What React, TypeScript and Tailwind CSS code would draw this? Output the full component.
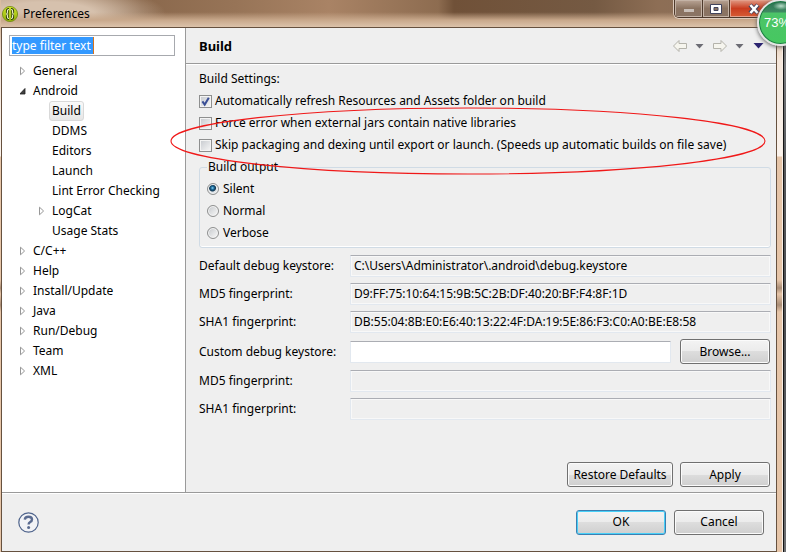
import { useState } from "react";

type Node = { label: string; level: 0 | 1; state: "closed" | "open" | "leaf" };

const tree: Node[] = [
  { label: "General", level: 0, state: "closed" },
  { label: "Android", level: 0, state: "open" },
  { label: "Build", level: 1, state: "leaf" },
  { label: "DDMS", level: 1, state: "leaf" },
  { label: "Editors", level: 1, state: "leaf" },
  { label: "Launch", level: 1, state: "leaf" },
  { label: "Lint Error Checking", level: 1, state: "leaf" },
  { label: "LogCat", level: 1, state: "closed" },
  { label: "Usage Stats", level: 1, state: "leaf" },
  { label: "C/C++", level: 0, state: "closed" },
  { label: "Help", level: 0, state: "closed" },
  { label: "Install/Update", level: 0, state: "closed" },
  { label: "Java", level: 0, state: "closed" },
  { label: "Run/Debug", level: 0, state: "closed" },
  { label: "Team", level: 0, state: "closed" },
  { label: "XML", level: 0, state: "closed" },
];

function AppIcon() {
  return (
    <svg width="16" height="16" viewBox="0 0 16 16" aria-hidden="true">
      <defs>
        <linearGradient id="lime" x1="0" y1="0" x2="0" y2="1">
          <stop offset="0" stopColor="#cfe32c" />
          <stop offset="1" stopColor="#8fb008" />
        </linearGradient>
      </defs>
      <circle cx="8" cy="8" r="7.6" fill="url(#lime)" stroke="#6e8a10" strokeWidth="0.8" />
      <path d="M7 3.5Q5.4 3.5 5.4 5V6.6Q5.4 8 4.2 8Q5.4 8 5.4 9.4V11Q5.4 12.5 7 12.5M9 3.5Q10.6 3.5 10.6 5V6.6Q10.6 8 11.8 8Q10.6 8 10.6 9.4V11Q10.6 12.5 9 12.5" fill="none" stroke="#2c3a08" strokeWidth="3" />
      <path d="M8 3.6V12.4" stroke="#b6cf22" strokeWidth="2.4" />
      <path d="M7 3.5Q5.4 3.5 5.4 5V6.6Q5.4 8 4.2 8Q5.4 8 5.4 9.4V11Q5.4 12.5 7 12.5M9 3.5Q10.6 3.5 10.6 5V6.6Q10.6 8 11.8 8Q10.6 8 10.6 9.4V11Q10.6 12.5 9 12.5" fill="none" stroke="#f3f7cf" strokeWidth="1.1" />
    </svg>
  );
}

function Twisty({ state }: { state: Node["state"] }) {
  return (
    <svg width="8" height="10" viewBox="0 0 8 10" aria-hidden="true" className="shrink-0">
      {state === "closed" && <path d="M0.5 1.2V8.8L4.6 5Z" fill="#fff" stroke="#979797" />}
      {state === "open" && <path d="M5 2.5V8H-0.2Z" fill="#404040" stroke="#202020" strokeWidth="0.8" />}
    </svg>
  );
}

function Check({ label, initial = false }: { label: string; initial?: boolean }) {
  const [on, setOn] = useState(initial);
  return (
    <label className="flex h-[22px] items-center gap-[3px]">
      <span className="grid">
        <input
          type="checkbox"
          checked={on}
          onChange={() => setOn(!on)}
          className="col-start-1 row-start-1 size-[13px] appearance-none border border-[#8e8f8f] bg-linear-to-br from-[#c6c9ce] to-[#f8f8f8] shadow-[inset_0_0_0_1px_#f4f4f4]"
        />
        {on && (
          <svg width="13" height="13" viewBox="0 0 13 13" aria-hidden="true" className="pointer-events-none col-start-1 row-start-1">
            <path d="M3.4 6.4L5.7 9.6L9.8 2.8" fill="none" stroke="#3a4f96" strokeWidth="2" />
          </svg>
        )}
      </span>
      {label}
    </label>
  );
}

function Radio({ label, initial = false }: { label: string; initial?: boolean }) {
  return (
    <label className="flex h-[22px] items-center gap-1">
      <input
        type="radio"
        name="build-output"
        defaultChecked={initial}
        className="size-3 appearance-none rounded-full border border-[#8e8f8f] bg-[linear-gradient(135deg,#c4c7cb,#fafafa)] shadow-[inset_0_0_0_1px_#f4f4f4] checked:bg-[radial-gradient(circle_at_45%_40%,#8fd8f6_0,#1c6ea0_1.5px,#12354f_3px,#dfe4e8_4px)]"
      />
      {label}
    </label>
  );
}

function Field({ id, label, value = "", editable = false, short = false }: { id: string; label: string; value?: string; editable?: boolean; short?: boolean }) {
  return (
    <div className={short ? "flex h-7 items-center" : "flex h-[25px] items-center"}>
      <label htmlFor={id} className="w-[151px] shrink-0">{label}</label>
      <input
        id={id}
        defaultValue={value}
        readOnly={!editable}
        className={
          "h-[22px] min-w-0 flex-1 rounded-[1px] border border-[#e2e8ef] border-t-[#abadb3] px-[3px] pb-0.5 outline-none " +
          (editable ? "bg-white" : "bg-[#efefef] shadow-[inset_0_0_0_1px_#f8f8f8]")
        }
      />
      {editable && <Button className="ml-[9px] mr-px w-[90px]">Browse...</Button>}
    </div>
  );
}

function Button({ children, className, primary = false }: { children: string; className: string; primary?: boolean }) {
  return (
    <button
      type="button"
      className={
        "h-[25px] shrink-0 rounded-[3px] border bg-[linear-gradient(#f3f3f3,#ebebeb_50%,#dddddd_50%,#cfcfcf)] text-center " +
        (primary ? "border-[#3c7fb1] shadow-[inset_0_0_0_1px_#48d0f8] " : "border-[#707070] shadow-[inset_0_0_0_1px_#fbfbfb] ") +
        className
      }
    >
      {children}
    </button>
  );
}

function NavArrow({ flip = false }: { flip?: boolean }) {
  return (
    <svg width="16" height="14" viewBox="0 0 16 14" aria-hidden="true" className={flip ? "-scale-x-100" : ""}>
      <path d="M1.5 7L7 1.5V4.5H14.5V9.5H7V12.5Z" fill="#f6f5ee" stroke="#b4b3ab" strokeLinejoin="round" />
    </svg>
  );
}

function Caret({ color }: { color: "gray" | "navy" }) {
  if (color === "navy") {
    return (
      <svg width="11" height="6" viewBox="0 0 11 6" aria-hidden="true">
        <path d="M0.5 0H10.5L5.5 5.5Z" fill="#2c2470" />
      </svg>
    );
  }
  return (
    <svg width="9" height="5" viewBox="0 0 9 5" aria-hidden="true">
      <path d="M0.5 0H8.5L4.5 4.6Z" fill="#6c6c74" />
    </svg>
  );
}

function TitleBar() {
  return (
    <header className="flex h-[27px] items-center gap-[5px] bg-[linear-gradient(to_bottom,transparent_45%,#c9a98c_75%,#dcc3ab),radial-gradient(ellipse_120px_30px_at_45px_14px,#d6c1ad_40%,transparent),linear-gradient(to_right,#b0937a,#8a684c_18%,#977457_30%,#a98365_42%,#8d6c50_56%,#705138_58%,#755a43_76%,#8d6e55_84%,#8b705e)] pl-px">
      <AppIcon />
      <h1>Preferences</h1>
      <div className="ml-auto mr-2 flex h-[18px] self-start overflow-hidden rounded-b-[5px] border border-t-0 border-[#4e3a2c] shadow-[0_0_0_1px_#dccabc]">
        <button type="button" aria-label="Minimize" className="grid w-7 place-items-center border-r border-[#4e3a2c] bg-[linear-gradient(#b9a495,#8b7361_50%,#8a7464)] shadow-[inset_0_0_0_1px_#c4b3a6]">
          <span className="mt-1 h-[3px] w-2.5 bg-[#c9bfb8]" />
        </button>
        <button type="button" aria-label="Maximize" className="grid w-[27px] place-items-center border-r border-[#4e3a2c] bg-[linear-gradient(#b9a495,#8b7361_50%,#8a7464)] shadow-[inset_0_0_0_1px_#c4b3a6]">
          <svg width="12" height="10" viewBox="0 0 12 10" aria-hidden="true">
            <path d="M0.5 0.5H11.5V9.5H0.5ZM4 3.5V6.5H8V3.5Z" fill="#fff" fillRule="evenodd" stroke="#41435c" />
          </svg>
        </button>
        <button type="button" aria-label="Close" className="grid w-[43px] place-items-center bg-[linear-gradient(#e09a84,#c93c1f_50%,#d65c35)] pl-1 shadow-[inset_0_0_0_1px_#e3a08c]">
          <svg width="12" height="12" viewBox="0 0 12 12" aria-hidden="true">
            <path d="M2 2L10 10M10 2L2 10" stroke="#41435c" strokeWidth="4.4" />
            <path d="M2.4 2L9.6 10M9.6 2L2.4 10" stroke="#fff" strokeWidth="2.6" />
          </svg>
        </button>
      </div>
    </header>
  );
}

export default function App() {
  const [selected, setSelected] = useState("Build");
  return (
    <div className="relative flex min-h-screen overflow-hidden bg-[linear-gradient(#3a3a3a,#77797c_12%,#55575a_30%,#4c4e52_60%,#6c6e71)] font-['Noto_Sans','Open_Sans',sans-serif] text-[12px] leading-4 text-black">
      <div className="mr-[3px] flex min-w-0 flex-1 flex-col border-r border-[#f8eee6] bg-[linear-gradient(#d9bda2_28px,#f4e6da_60px,#fbf3ec_156px,#e6c5a8_157px,#e6c5a8_280px,#a98d76_288px,#e6c5a8_294px,#a98d76_305px,#e6c5a8_312px)] pl-px">
        <TitleBar />
        <div className="mr-[5px] flex flex-1 flex-col border border-[#66513f] bg-[#efefef]">
          <div className="flex flex-1 border-b border-[#9a9a9a]">
            <aside className="w-[184px] shrink-0 border-r border-[#9a9a9a] bg-white pt-[7px]">
              <div className="ml-[7px] mr-[10px] flex h-[21px] items-center border border-[#a7a9ae] px-0.5">
                <input
                  aria-label="Filter"
                  defaultValue="type filter text"
                  className="h-[17px] w-[82px] border-r border-[#d9731a] bg-[#3399ff] text-white outline-none"
                />
              </div>
              <ul className="pt-[5px]">
                {tree.map((node) => (
                  <li key={node.label} className={"flex h-5 items-center " + (node.level === 0 ? "pl-[18px]" : "pl-[37px]")}>
                    <Twisty state={node.state} />
                    <button
                      type="button"
                      onClick={() => setSelected(node.label)}
                      className={
                        "ml-0.5 flex h-5 items-center rounded-[3px] border px-[2px] " +
                        (node.label === selected ? "border-[#d9d9d9] bg-linear-to-b from-[#fafafa] to-[#e6e6e6]" : "border-transparent")
                      }
                    >
                      {node.label}
                    </button>
                  </li>
                ))}
              </ul>
            </aside>

            <main className="relative flex min-w-0 flex-1 flex-col">
              <div className="flex h-9 items-center border-b border-[#9a9a9a] px-3 pt-px">
                <h2 className="flex-1 pl-px text-[13px] font-bold">Build</h2>
                <div className="flex items-center">
                  <button type="button" aria-label="Back"><NavArrow /></button>
                  <button type="button" aria-label="Back history" className="ml-[7px]"><Caret color="gray" /></button>
                  <button type="button" aria-label="Forward" className="ml-2"><NavArrow flip /></button>
                  <button type="button" aria-label="Forward history" className="ml-[7px]"><Caret color="gray" /></button>
                  <button type="button" aria-label="Menu" className="ml-[9px]"><Caret color="navy" /></button>
                </div>
              </div>

              <div className="flex flex-1 flex-col border-t border-white pb-[5px] pl-[13px] pr-[5px] pt-[6px]">
                <p className="mb-[3px]">Build Settings:</p>
                <Check label="Automatically refresh Resources and Assets folder on build" initial />
                <Check label="Force error when external jars contain native libraries" />
                <Check label="Skip packaging and dexing until export or launch. (Speeds up automatic builds on file save)" />

                <fieldset className="mt-[3px] rounded-[3px] border border-[#d0dbe5] pb-[3px] pl-[7px] shadow-[inset_0_-1px_0_#fff]">
                  <legend className="px-px">Build output</legend>
                  <div className="pt-[3px]">
                    <Radio label="Silent" initial />
                    <Radio label="Normal" />
                    <Radio label="Verbose" />
                  </div>
                </fieldset>

                <div className="mt-1">
                  <Field short id="default-keystore" label="Default debug keystore:" value="C:\Users\Administrator\.android\debug.keystore" />
                  <Field short id="default-md5" label="MD5 fingerprint:" value="D9:FF:75:10:64:15:9B:5C:2B:DF:40:20:BF:F4:8F:1D" />
                  <Field short id="default-sha1" label="SHA1 fingerprint:" value="DB:55:04:8B:E0:E6:40:13:22:4F:DA:19:5E:86:F3:C0:A0:BE:E8:58" />
                  <div className="py-[3px]">
                    <Field id="custom-keystore" label="Custom debug keystore:" editable />
                  </div>
                  <Field short id="custom-md5" label="MD5 fingerprint:" />
                  <Field short id="custom-sha1" label="SHA1 fingerprint:" />
                </div>

                <div className="mt-auto flex justify-end gap-[7px] pr-px">
                  <Button className="w-[106px]">Restore Defaults</Button>
                  <Button className="w-[90px]">Apply</Button>
                </div>
              </div>

              <svg className="pointer-events-none absolute -left-4 top-[78px]" width="597" height="70" viewBox="0 0 597 70" aria-hidden="true">
                <ellipse cx="298" cy="35" rx="297" ry="33" fill="none" stroke="#f01818" strokeWidth="1.1" />
              </svg>
            </main>
          </div>

          <footer className="flex h-[58px] items-center gap-2 border-t border-white pb-px pl-4 pr-3">
            <button type="button" aria-label="Help" className="mr-auto">
              <svg width="21" height="21" viewBox="0 0 21 21" aria-hidden="true">
                <circle cx="10.5" cy="10.5" r="9.7" fill="#f2f3f6" stroke="#4f648c" strokeWidth="1.2" />
                <path d="M6.8 7.6Q7 4.8 10.5 4.8Q14 4.8 14 7.5Q14 9.1 12.2 10Q10.6 10.9 10.6 12.6" fill="none" stroke="#5a6b90" strokeWidth="2.4" />
                <circle cx="10.6" cy="15.6" r="1.5" fill="#5a6b90" />
              </svg>
            </button>
            <Button primary className="w-[90px]">OK</Button>
            <Button className="w-[90px]">Cancel</Button>
          </footer>
        </div>
      </div>

      <div className="absolute inset-y-0 right-[2px] w-px bg-[#151515]" />
      <div className="absolute -right-[18px] -top-px flex size-[47px] items-center overflow-hidden rounded-full border-2 border-[#e4e4e4] bg-[radial-gradient(ellipse_8px_4px_at_22px_5px,#b8dcc8,transparent),linear-gradient(#2a7050_0,#3f8a62_11px,#4cc468_12px,#46c860)] pl-[5px] font-['Liberation_Sans',sans-serif] text-[13px] text-white shadow-[0_1px_4px_#555,inset_0_0_0_1px_#1c7a44]">
        73%
      </div>
    </div>
  );
}
